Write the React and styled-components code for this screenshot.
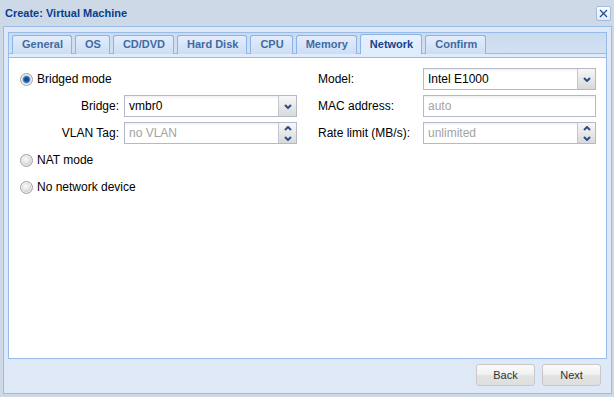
import React from "react"
import styled, { createGlobalStyle } from "styled-components"

const GlobalStyle = createGlobalStyle`
  html, body {
    margin: 0;
    padding: 0;
  }
  body {
    background: #ffffff;
    font-family: "Liberation Sans", Arial, sans-serif;
  }
`

const Window = styled.div`
  width: 614px;
  height: 397px;
  box-sizing: border-box;
  background: #ced9e7;
  display: flex;
  flex-direction: column;
`

const Header = styled.div`
  height: 26px;
  box-sizing: border-box;
  padding: 0 3px 0 5px;
  display: flex;
  align-items: center;
  justify-content: space-between;
`

const Title = styled.div`
  font: bold 11px "Liberation Sans", Arial, sans-serif;
  color: #04408c;
  padding-bottom: 1px;
`

const CloseTool = styled.div`
  width: 15px;
  height: 15px;
  box-sizing: border-box;
  border: 1px solid #a3bde0;
  border-radius: 2px;
  background: linear-gradient(#fbfdff, #dfe9f6);
  display: flex;
  align-items: center;
  justify-content: center;
  margin-top: 1px;
`

const Frame = styled.div`
  margin: 0 2px 0 3px;
  height: 368px;
  box-sizing: border-box;
  border: 1px solid #99bbe8;
  background: #dfe8f6;
  padding: 5px 4px 0 4px;
  display: flex;
  flex-direction: column;
`

const TabPanel = styled.div`
  height: 327px;
  display: flex;
  flex-direction: column;
`

const TabBar = styled.div`
  border: 1px solid #99bbe8;
  border-bottom: none;
  background: linear-gradient(#cbdbef, #d3e1f2);
  padding-top: 1px;
`

const TabRow = styled.div`
  height: 20px;
  display: flex;
  align-items: flex-end;
  gap: 3px;
  padding-left: 3px;
  box-shadow: inset 0 -1px 0 #99bbe8;
`

const Tab = styled.div`
  height: ${p => (p.$active ? 20 : 19)}px;
  box-sizing: border-box;
  padding: 0 8px 0 9px;
  border: 1px solid #8db2e3;
  border-bottom: none;
  border-radius: 3px 3px 0 0;
  font: bold 11px "Liberation Sans", Arial, sans-serif;
  line-height: ${p => (p.$active ? 18 : 17)}px;
  color: ${p => (p.$active ? "#15428b" : "#416aa3")};
  background: ${p =>
    p.$active
      ? "linear-gradient(#e6f0fd, #deecfd)"
      : "linear-gradient(#e3edfb, #ccdef5)"};
`

const Strip = styled.div`
  height: 3px;
  background: #deecfd;
`

const Content = styled.div`
  flex: 1;
  border: 1px solid #99bbe8;
  background: #ffffff;
  padding: 10px 9px 0 11px;
  display: grid;
  grid-template-columns: 277px 278px;
  column-gap: 21px;
  align-items: start;
`

const Column = styled.div`
  display: flex;
  flex-direction: column;
  gap: 5px;
`

const Row = styled.div`
  height: 22px;
  display: flex;
  align-items: center;
`

const RadioLabel = styled.label`
  display: flex;
  align-items: center;
  gap: 4px;
  font: 12px "Liberation Sans", Arial, sans-serif;
  color: #000;
`

const RadioDot = styled.span`
  width: 13px;
  height: 13px;
  box-sizing: border-box;
  border-radius: 50%;
  border: 1px solid #a2a2a2;
  box-shadow: inset 0 0 0 1px rgba(255, 255, 255, 0.6);
  background: ${p =>
    p.$checked
      ? "radial-gradient(circle at 50% 50%, #123f85 0, #1e5aa8 2.4px, #4f88cc 3.2px, #c4d6ea 4.2px, #e6e6e6 5px, #cfcfcf 6px)"
      : "radial-gradient(circle at 45% 40%, #fafafa 0, #e9e9e9 3px, #cdcdcd 6px)"};
`

const FieldLabel = styled.div`
  width: ${p => p.$width}px;
  flex: none;
  box-sizing: border-box;
  padding-right: 5px;
  text-align: ${p => p.$align};
  font: 12px "Liberation Sans", Arial, sans-serif;
  color: #000;
`

const Field = styled.div`
  width: 173px;
  height: 22px;
  box-sizing: border-box;
  border: 1px solid #b5b8c8;
  background: linear-gradient(#f0f0f0 0, #ffffff 3px);
  display: flex;
`

const FieldText = styled.div`
  flex: 1;
  padding: 0 4px;
  font: 12px "Liberation Sans", Arial, sans-serif;
  line-height: 20px;
  color: ${p => (p.$muted ? "#a3a3a3" : "#000")};
`

const Trigger = styled.div`
  width: 17px;
  border-left: 1px solid #c3c6d2;
  background: linear-gradient(#f7f7f7, #d9d9d9);
  display: flex;
  flex-direction: column;
  align-items: center;
  justify-content: center;
`

const SpinHalf = styled.div`
  flex: 1;
  display: flex;
  align-items: center;
  justify-content: center;
`

const Toolbar = styled.div`
  flex: 1;
  display: flex;
  justify-content: flex-end;
  align-items: flex-start;
  gap: 7px;
  padding: 5px 6px 0 0;
`

const Button = styled.button`
  width: 59px;
  height: 22px;
  box-sizing: border-box;
  border: 1px solid #c8c8c8;
  border-radius: 3px;
  background: linear-gradient(#fbfbfb 0, #f1f1f1 45%, #e2e2e2 55%, #dfdfdf 100%);
  font: 11px "Liberation Sans", Arial, sans-serif;
  color: #333;
  padding: 0;
`

const Chevron = ({ up }) => (
  <svg width="8" height="5" viewBox="0 0 8 5">
    <path
      d={up ? "M1 4 L4 1 L7 4" : "M1 1 L4 4 L7 1"}
      fill="none"
      stroke="#2b4c8a"
      strokeWidth="2"
    />
  </svg>
)

const Combo = ({ value }) => (
  <Field>
    <FieldText>{value}</FieldText>
    <Trigger>
      <Chevron />
    </Trigger>
  </Field>
)

const Spinner = ({ placeholder }) => (
  <Field>
    <FieldText $muted>{placeholder}</FieldText>
    <Trigger>
      <SpinHalf>
        <Chevron up />
      </SpinHalf>
      <SpinHalf>
        <Chevron />
      </SpinHalf>
    </Trigger>
  </Field>
)

const Text = ({ placeholder }) => (
  <Field>
    <FieldText $muted>{placeholder}</FieldText>
  </Field>
)

const Radio = ({ checked, children }) => (
  <Row>
    <RadioLabel>
      <RadioDot $checked={checked} />
      {children}
    </RadioLabel>
  </Row>
)

const tabs = ["General", "OS", "CD/DVD", "Hard Disk", "CPU", "Memory", "Network", "Confirm"]

export default function App() {
  return (
    <>
      <GlobalStyle />
      <Window>
        <Header>
          <Title>Create: Virtual Machine</Title>
          <CloseTool>
            <svg width="9" height="9" viewBox="0 0 9 9">
              <path d="M1 1 L8 8 M8 1 L1 8" stroke="#1d4a8a" strokeWidth="1.2" />
            </svg>
          </CloseTool>
        </Header>
        <Frame>
          <TabPanel>
            <TabBar>
              <TabRow>
                {tabs.map(t => (
                  <Tab key={t} $active={t === "Network"}>
                    {t}
                  </Tab>
                ))}
              </TabRow>
              <Strip />
            </TabBar>
            <Content>
              <Column>
                <Radio checked>Bridged mode</Radio>
                <Row>
                  <FieldLabel $width={104} $align="right">Bridge:</FieldLabel>
                  <Combo value="vmbr0" />
                </Row>
                <Row>
                  <FieldLabel $width={104} $align="right">VLAN Tag:</FieldLabel>
                  <Spinner placeholder="no VLAN" />
                </Row>
                <Radio>NAT mode</Radio>
                <Radio>No network device</Radio>
              </Column>
              <Column>
                <Row>
                  <FieldLabel $width={105} $align="left">Model:</FieldLabel>
                  <Combo value="Intel E1000" />
                </Row>
                <Row>
                  <FieldLabel $width={105} $align="left">MAC address:</FieldLabel>
                  <Text placeholder="auto" />
                </Row>
                <Row>
                  <FieldLabel $width={105} $align="left">Rate limit (MB/s):</FieldLabel>
                  <Spinner placeholder="unlimited" />
                </Row>
              </Column>
            </Content>
          </TabPanel>
          <Toolbar>
            <Button>Back</Button>
            <Button>Next</Button>
          </Toolbar>
        </Frame>
      </Window>
    </>
  )
}
